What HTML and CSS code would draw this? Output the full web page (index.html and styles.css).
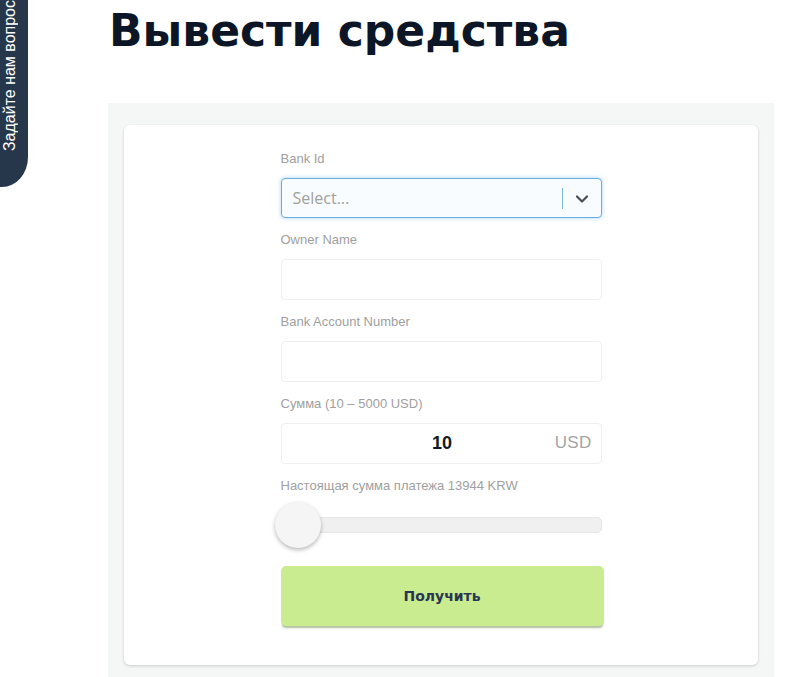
FILE: index.html
```html
<!DOCTYPE html>
<html lang="ru">
<head>
<meta charset="utf-8">
<title>Вывести средства</title>
<link rel="stylesheet" href="styles.css">
</head>
<body>
<div class="ask-tab"><span class="ask-text">Задайте нам вопрос</span></div>
<main class="page">
  <h1 class="title">Вывести средства</h1>
  <section class="panel">
    <div class="card">
      <form class="form">
        <div class="group">
          <label class="label">Bank Id</label>
          <div class="select">
            <span class="select-placeholder">Select...</span>
            <span class="select-sep"></span>
            <span class="select-arrow">
              <svg width="14" height="10" viewBox="0 0 14 10"><path d="M2 2.5 L7 7.5 L12 2.5" fill="none" stroke="#4a4f55" stroke-width="2.2" stroke-linecap="round" stroke-linejoin="round"/></svg>
            </span>
          </div>
        </div>
        <div class="group">
          <label class="label">Owner Name</label>
          <div class="input"></div>
        </div>
        <div class="group">
          <label class="label">Bank Account Number</label>
          <div class="input"></div>
        </div>
        <div class="group">
          <label class="label">Сумма (10 – 5000 USD)</label>
          <div class="input amount">
            <span class="amount-value">10</span>
            <span class="amount-cur">USD</span>
          </div>
        </div>
        <div class="group group-slider">
          <label class="label">Настоящая сумма платежа 13944 KRW</label>
          <div class="slider">
            <div class="slider-track"></div>
            <div class="slider-thumb"></div>
          </div>
        </div>
        <button type="button" class="submit">Получить</button>
      </form>
    </div>
  </section>
</main>
</body>
</html>
```

FILE: styles.css
```css
html, body {
  margin: 0;
  padding: 0;
  background: #ffffff;
}
body {
  font-family: "Liberation Sans", Arial, sans-serif;
  width: 800px;
  height: 677px;
  overflow: hidden;
}
.ask-tab {
  position: absolute;
  left: 0;
  top: -10px;
  width: 28px;
  height: 197px;
  background: #27374b;
  border-bottom-right-radius: 26px 30px;
  display: flex;
  align-items: flex-end;
  justify-content: center;
}
.ask-text {
  writing-mode: vertical-rl;
  transform: rotate(180deg);
  color: #ffffff;
  font-family: "Liberation Sans", Arial, sans-serif;
  font-size: 16px;
  line-height: 18px;
  white-space: nowrap;
  margin-bottom: 36px;
  margin-right: 8px;
}
.page {
  padding-left: 108px;
}
.title {
  margin: 0;
  padding: 3px 0 0 1px;
  height: 103px;
  box-sizing: border-box;
  font-family: "DejaVu Sans", Verdana, sans-serif;
  font-weight: bold;
  font-size: 44px;
  line-height: 56px;
  color: #0c1626;
}
.panel {
  width: 666px;
  height: 574px;
  box-sizing: border-box;
  background: #f5f7f7;
  padding: 22px 16px 12px 16px;
}
.card {
  background: #ffffff;
  border-radius: 6px;
  box-shadow: 0 1px 3px rgba(0, 0, 0, 0.18);
  height: 540px;
  box-sizing: border-box;
  padding-top: 25px;
  display: flex;
  justify-content: center;
}
.form {
  width: 321px;
}
.group {
  margin-bottom: 13px;
}
.label {
  display: block;
  font-size: 13px;
  line-height: 18px;
  color: #a0a0a0;
  margin-bottom: 10px;
}
.select {
  height: 40px;
  box-sizing: border-box;
  border: 1px solid #6aaee0;
  border-radius: 4px;
  background: #f9fcfe;
  box-shadow: 0 0 4px rgba(102, 175, 233, 0.55);
  display: flex;
  align-items: center;
  padding-left: 11px;
}
.select-placeholder {
  flex: 1;
  font-family: "Open Sans", "Liberation Sans", sans-serif;
  font-size: 16px;
  color: #a0a0a0;
}
.select-sep {
  width: 1px;
  height: 21px;
  background: #7cb9e3;
}
.select-arrow {
  width: 38px;
  display: flex;
  justify-content: center;
  align-items: center;
  padding-top: 1px;
}
.input {
  height: 41px;
  box-sizing: border-box;
  border: 1px solid #eef0f0;
  border-radius: 4px;
  background: #ffffff;
}
.amount {
  display: flex;
  align-items: center;
  position: relative;
}
.amount-value {
  flex: 1;
  text-align: center;
  font-size: 18px;
  font-weight: bold;
  color: #111a27;
  padding-left: 2px;
}
.amount-cur {
  position: absolute;
  right: 9px;
  top: 9px;
  font-size: 17px;
  color: #a4a4a4;
  letter-spacing: 0.3px;
}
.group-slider {
  margin-bottom: 17px;
}
.group-slider .label {
  margin-bottom: 0;
}
.slider {
  position: relative;
  height: 54px;
}
.slider-track {
  position: absolute;
  left: 0;
  right: 0;
  top: 22px;
  height: 16px;
  box-sizing: border-box;
  background: #f0f0f0;
  border: 1px solid #e6e6e6;
  border-radius: 5px;
}
.slider-thumb {
  position: absolute;
  left: -6px;
  top: 7px;
  width: 46px;
  height: 46px;
  border-radius: 50%;
  background: #f5f5f5;
  box-shadow: 0 2px 4px rgba(0, 0, 0, 0.28);
}
.submit {
  display: block;
  width: 323px;
  height: 60px;
  border: none;
  border-radius: 5px;
  background: #c8ec8f;
  box-shadow: 0 3px 2px -1px rgba(110, 140, 80, 0.55);
  font-family: "DejaVu Sans", Verdana, sans-serif;
  font-weight: bold;
  font-size: 14px;
  color: #2a3553;
  cursor: pointer;
  padding: 0;
}
```
